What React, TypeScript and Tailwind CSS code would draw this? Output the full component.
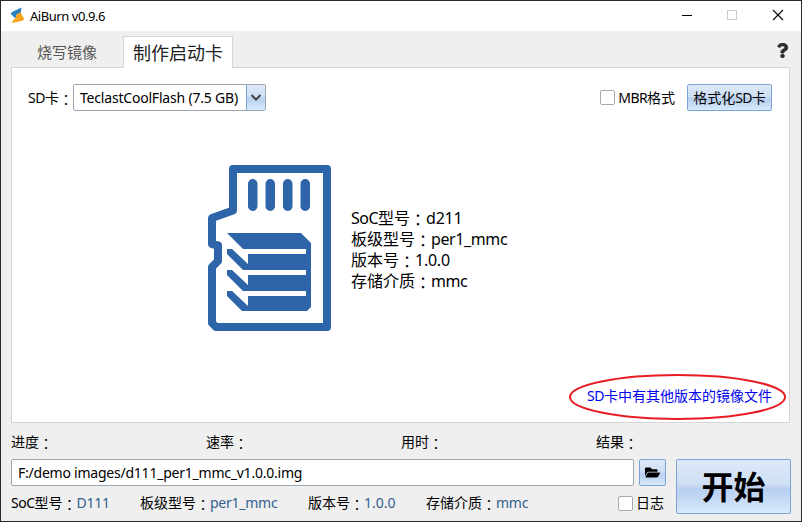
import type { ReactNode } from "react";
import { FaFolderOpen, FaQuestion } from "react-icons/fa";

const glossy =
  "border border-[#7da2d6] rounded-[2px] bg-[linear-gradient(180deg,#dde9f8_0%,#cfdff5_45%,#b9d0f1_55%,#bdd4f2_65%,#d8eafb_100%)]";

function Colon() {
  return (
    <span className="mt-px -mb-px font-['Noto_Sans_CJK_TC',sans-serif] tracking-normal">：</span>
  );
}

interface FieldProps {
  label: string;
  latin?: string;
  value?: string;
  className?: string;
  valueClass?: string;
}

function Field({ label, latin, value, className = "", valueClass = "text-[#34618f] tracking-[-0.25px]" }: FieldProps) {
  return (
    <div className={`flex whitespace-nowrap ${className}`}>
      {latin && <span className="tracking-[-0.5px]">{latin}</span>}
      <span>{label}</span>
      <Colon />
      {value && <span className={valueClass}>{value}</span>}
    </div>
  );
}

function Check({ children }: { children: ReactNode }) {
  return (
    <label className="flex items-center gap-[3px] whitespace-nowrap">
      <span className="h-[15px] w-[15px] rounded-[2px] border border-[#a5abb3] bg-white" />
      <span>{children}</span>
    </label>
  );
}

function Logo() {
  return (
    <svg width="16" height="18" viewBox="0 0 16 18">
      <path d="M0.500 6.500 3 4.500 11.500 0.500 10.800 6 6.800 7.500 5.300 11.500Z" fill="#2b83c2" />
      <path d="M10.500 5.200 14.200 12 13 13.500 2.500 16 2 14.500 5.200 11.500 6.800 7.200Z" fill="#f8a51b" />
    </svg>
  );
}

function CardIcon() {
  return (
    <svg width="124" height="166" viewBox="0 0 124 166" fill="#2d65a8">
      <path
        d="M25 4H119V162H8L4 158V102L10 96V80.500L4 79V53L25 45.500Z"
        fill="none"
        stroke="#2d65a8"
        strokeWidth="8"
        strokeLinejoin="round"
      />
      <rect x="40" y="14" width="9.500" height="32" rx="4.700" />
      <rect x="57.500" y="14" width="9.500" height="32" rx="4.700" />
      <rect x="75" y="14" width="9.500" height="32" rx="4.700" />
      <rect x="92.500" y="14" width="9.500" height="32" rx="4.700" />
      <path d="M19 68H93L103 78V142L99 146H34L19 131V126H24L40 141V131H98V126H35L24 115 19 110V105H24L40 120V110H98V105H35L19 89V84H24L40 99V89H98V84H35Z" />
    </svg>
  );
}

export default function App() {
  return (
    <div className="flex h-[522px] w-[802px] flex-col border border-[#2a2a2c] bg-[#efefef] font-['Noto_Sans','Noto_Sans_CJK_SC',sans-serif] text-[14px] leading-[20px] text-black">
      <header className="flex h-[30px] shrink-0 items-center bg-white pl-[9px]">
        <Logo />
        <span className="ml-[4px] text-[13px] tracking-[-0.45px]">AiBurn v0.9.6</span>
        <svg className="ml-auto" width="121" height="30" viewBox="0 0 121 30" fill="none">
          <path d="M2 14.500H12" stroke="#000" />
          <rect x="47.500" y="9.500" width="9" height="9" stroke="#ccc" />
          <path d="m93 9 10 10m0-10-10 10" stroke="#000" strokeWidth="1.100" />
        </svg>
      </header>

      <nav className="flex h-[36px] shrink-0 items-end pl-[10px] pr-[11px]">
        <div className="flex h-[31px] w-[112px] items-center justify-center text-[15px] text-[#555]">烧写镜像</div>
        <div className="z-10 -mb-px flex h-[32px] w-[110px] items-center justify-center border border-b-0 border-[#d5d5d5] bg-white pt-px text-[18px] text-[#222]">
          制作启动卡
        </div>
        <FaQuestion className="mb-[9px] ml-auto text-[15px] text-[#2d2d2d]" stroke="#2d2d2d" strokeWidth="18" />
      </nav>

      <main className="ml-[10px] flex h-[356px] w-[779px] shrink-0 flex-col border border-[#d5d5d5] bg-white">
        <div className="mt-[16px] flex h-[27px] items-center pl-[16px] pr-[17px]">
          <div className="flex w-[45px] whitespace-nowrap">
            <span className="tracking-[-0.4px]">SD</span>卡
            <Colon />
          </div>
          <div className="flex h-[27px] w-[193px] rounded-[2px] border border-[#9da5b0]">
            <span className="flex flex-1 items-center whitespace-nowrap pl-[6px] tracking-[-0.2px]">
              TeclastCoolFlash (7.5 GB)
            </span>
            <span className="flex w-[19px] items-center justify-center border-l border-[#7da2d6] bg-[linear-gradient(180deg,#dde9f8_0%,#cfdff5_45%,#b9d0f1_55%,#d8eafb_100%)]">
              <svg width="12" height="8" viewBox="0 0 12 8" fill="none">
                <path d="m1.500 1 4.500 4.500L10.500 1" stroke="#454545" strokeWidth="2" />
              </svg>
            </span>
          </div>
          <div className="ml-auto flex items-center gap-[12px]">
            <Check>
              <span className="tracking-[-0.6px]">MBR</span>格式
            </Check>
            <button className={`h-[27px] w-[85px] whitespace-nowrap ${glossy}`}>
              格式化<span className="tracking-[-0.6px]">SD</span>卡
            </button>
          </div>
        </div>

        <div className="mt-[54px] flex h-[166px] items-center gap-[19px] pl-[196px]">
          <CardIcon />
          <div className="pt-[4px] text-[16px] leading-[21px]">
            <Field latin="SoC" label="型号" value="d211" valueClass="text-black tracking-[-0.25px]" />
            <Field label="板级型号" value="per1_mmc" valueClass="text-black tracking-[-0.4px]" />
            <Field label="版本号" value="1.0.0" valueClass="text-black tracking-[-0.25px]" />
            <Field label="存储介质" value="mmc" valueClass="text-black tracking-[-0.5px]" />
          </div>
        </div>

        <div className="relative mb-[16px] mr-[17px] mt-auto self-end whitespace-nowrap text-[#0000f0]">
          <span className="tracking-[-0.5px]">SD</span>卡中有其他版本的镜像文件
          <svg className="absolute -left-[19px] -top-[13px]" width="219" height="48" viewBox="0 0 219 48" fill="none">
            <ellipse cx="109.500" cy="24" rx="107.500" ry="22" stroke="#e81c24" strokeWidth="2" />
          </svg>
        </div>
      </main>

      <div className="flex h-[36px] shrink-0 items-center pl-[10px] pt-px">
        <Field label="进度" className="w-[195px]" />
        <Field label="速率" className="w-[195px]" />
        <Field label="用时" className="w-[195px]" />
        <Field label="结果" />
      </div>

      <footer className="flex pl-[10px]">
        <div className="w-[655px]">
          <div className="flex gap-[5px]">
            <div className="flex h-[27px] w-[623px] items-center rounded-[2px] border border-[#9da5b0] bg-white pl-[6px] pt-px tracking-[-0.23px]">
              F:/demo images/d111_per1_mmc_v1.0.0.img
            </div>
            <button className={`flex h-[27px] w-[27px] items-center justify-center ${glossy}`}>
              <FaFolderOpen className="text-[15px]" />
            </button>
          </div>
          <div className="mt-[7px] flex h-[20px] items-center">
            <Field latin="SoC" label="型号" value="D111" className="w-[129px]" />
            <Field label="板级型号" value="per1_mmc" className="w-[168px]" />
            <Field label="版本号" value="1.0.0" className="w-[118px]" valueClass="text-[#34618f]" />
            <Field label="存储介质" value="mmc" className="w-[192px]" />
            <Check>日志</Check>
          </div>
        </div>
        <button className={`ml-[10px] h-[55px] w-[115px] text-[32px] font-bold leading-[50px] ${glossy}`}>开始</button>
      </footer>
    </div>
  );
}
